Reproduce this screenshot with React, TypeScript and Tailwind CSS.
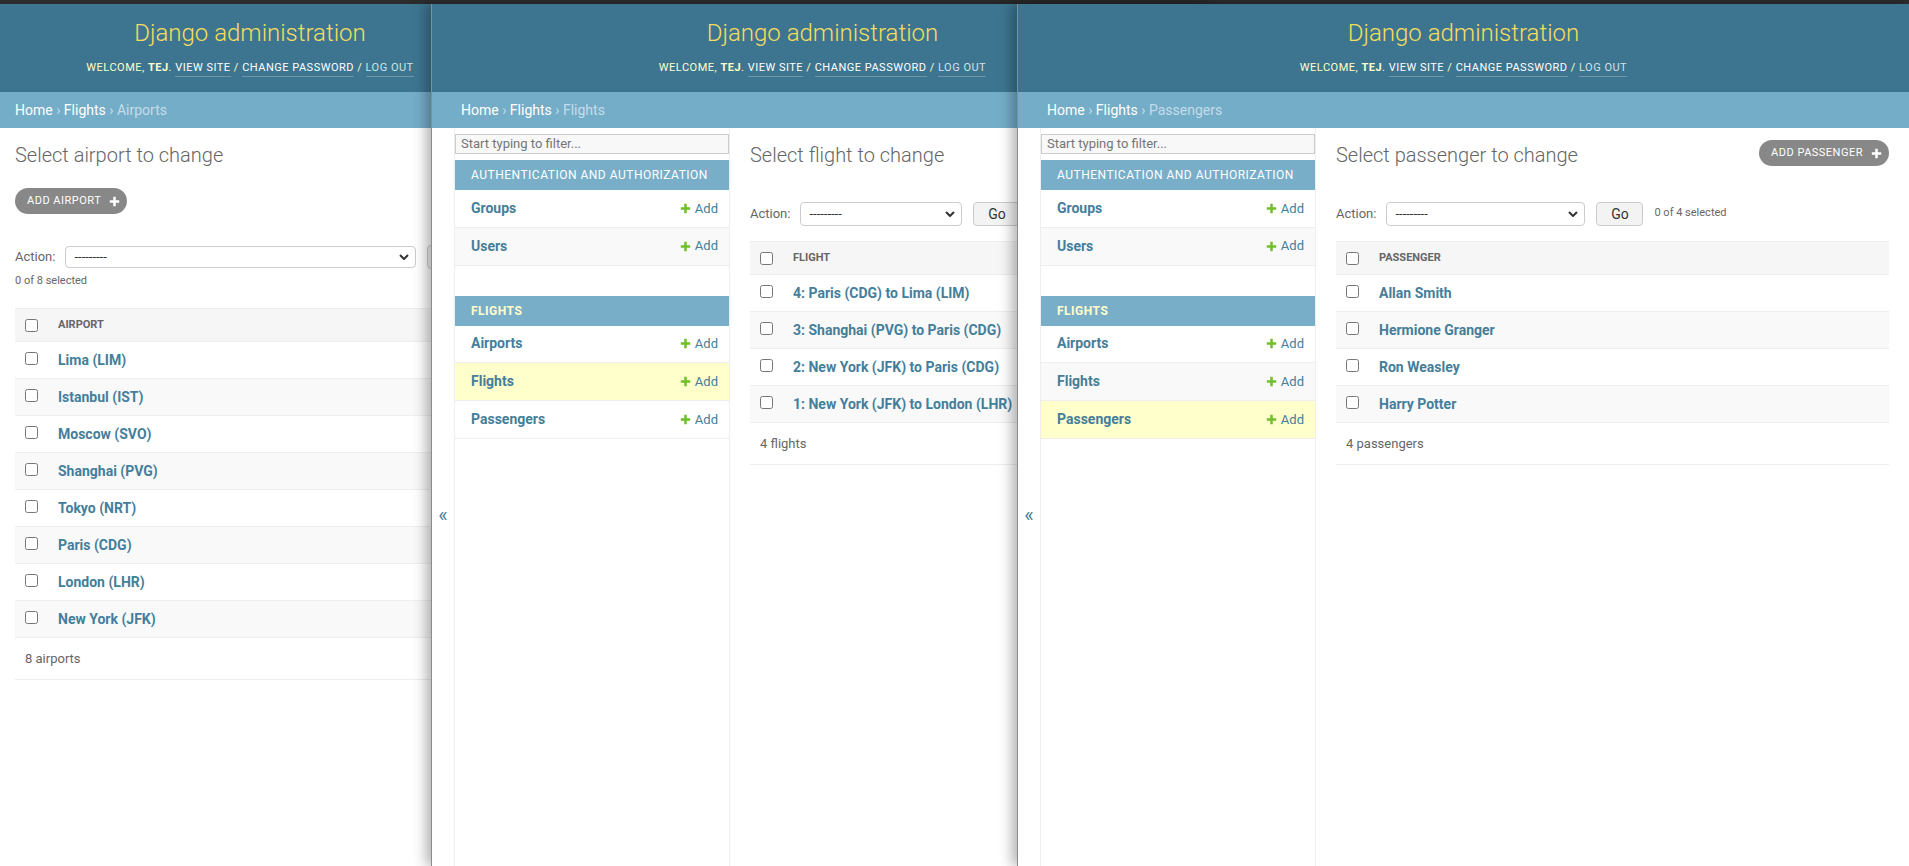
import React from 'react';

type Props = { className?: string };

function PlusIcon({ className }: Props) {
  return (
    <svg viewBox="0 0 14 14" className={className} fill="currentColor">
      <path d="M5.4 1h3.2v4.4H13v3.2H8.6V13H5.4V8.6H1V5.4h4.4z" />
    </svg>
  );
}

function Window({ className, children }: { className: string; children: React.ReactNode }) {
  return (
    <div className={`absolute top-[4px] bottom-0 bg-white flex flex-col overflow-hidden ${className}`}>
      {children}
    </div>
  );
}

function Header() {
  return (
    <div className="h-[88px] shrink-0 bg-[#3d7590] flex flex-col items-center pt-[15px]">
      <div className="text-[24px] leading-[29px] font-light text-[#f5dd5d] whitespace-nowrap">Django administration</div>
      <div className="mt-[13px] text-[11px] leading-[14px] tracking-[0.5px] uppercase text-[#ffc] whitespace-nowrap">
        Welcome, <strong className="font-bold">Tej</strong>.{' '}
        <span className="text-white border-b border-white/25 pb-[2px]">View site</span> /{' '}
        <span className="text-white border-b border-white/25 pb-[2px]">Change password</span> /{' '}
        <span className="text-[#d3e1e9] border-b border-white/25 pb-[2px]">Log out</span>
      </div>
    </div>
  );
}

function Crumbs({ pad, current }: { pad: string; current: string }) {
  return (
    <div className={`h-[36px] shrink-0 bg-[#74adc8] flex items-center text-[14px] text-[#c4dce8] whitespace-nowrap ${pad}`}>
      <span className="text-white">Home</span>&nbsp;›&nbsp;<span className="text-white">Flights</span>&nbsp;›&nbsp;{current}
    </div>
  );
}

function AddButton({ label, className }: { label: string; className: string }) {
  return (
    <div className={`flex shrink-0 ${className}`}>
      <div className="h-[26px] rounded-full bg-[#888] flex items-center pl-[12px] pr-[7px] gap-[8px] text-[11px] tracking-[0.5px] uppercase text-white whitespace-nowrap">
        {label}
        <PlusIcon className="w-[11px] h-[11px] text-white" />
      </div>
    </div>
  );
}

function Select({ w, h }: { w: string; h: string }) {
  return (
    <div className={`${w} ${h} ml-[10px] border border-[#ccc] rounded-[4px] bg-white flex items-center pl-[8px] pr-[6px] text-[13px] text-[#333]`}>
      <span className="flex-1">---------</span>
      <svg viewBox="0 0 10 6" className="w-[10px] h-[6px]" fill="none" stroke="#333" strokeWidth="2">
        <path d="M1 1l4 4 4-4" />
      </svg>
    </div>
  );
}

function ActionBar({ w, h, selected }: { w: string; h: string; selected?: string }) {
  return (
    <div className="flex items-center whitespace-nowrap">
      <span className="text-[13px] text-[#666]">Action:</span>
      <Select w={w} h={h} />
      <div className="ml-[11px] h-[24px] w-[47px] shrink-0 border border-[#ccc] rounded-[4px] bg-[#f3f3f3] flex items-center justify-center text-[14px] text-[#333]">
        Go
      </div>
      {selected && <span className="ml-[11px] text-[11px] text-[#666] mb-[2px]">{selected}</span>}
    </div>
  );
}

function ResultTable({ col, items, count, className }: { col: string; items: string[]; count: string; className: string }) {
  return (
    <div className={className}>
      <div className="h-[34px] bg-[#f6f6f6] border-y border-[#eee] flex items-center">
        <div className="w-[43px] pl-[10px] flex">
          <input type="checkbox" className="w-[13px] h-[13px]" />
        </div>
        <span className="text-[11px] font-bold text-[#666] uppercase">{col}</span>
      </div>
      {items.map((t, i) => (
        <div key={t} className={`h-[37px] border-b border-[#eee] flex items-center ${i % 2 ? 'bg-[#f9f9f9]' : 'bg-white'}`}>
          <div className="w-[43px] pl-[10px] flex mb-[3px]">
            <input type="checkbox" className="w-[13px] h-[13px]" />
          </div>
          <span className="text-[14px] font-bold text-[#447e9b] whitespace-nowrap">{t}</span>
        </div>
      ))}
      <div className="h-[42px] border-b border-[#eee] flex items-center pl-[10px] text-[13px] text-[#666]">{count}</div>
    </div>
  );
}

function SideRow({ name, bg }: { name: string; bg: string }) {
  return (
    <div className={`h-[37.8px] border-b border-[#eee] flex items-center pl-[16px] pr-[11px] ${bg}`}>
      <span className="flex-1 text-[14px] font-bold text-[#447e9b]">{name}</span>
      <span className="flex items-center gap-[4px] text-[13px] text-[#447e9b]">
        <PlusIcon className="w-[11px] h-[11px] text-[#70bf2b]" />
        Add
      </span>
    </div>
  );
}

function Sidebar({ current }: { current: string }) {
  const bg = (name: string, odd: boolean) =>
    name === current ? 'bg-[#ffffcc]' : odd ? 'bg-[#f9f9f9]' : 'bg-white';
  return (
    <div className="w-[276px] shrink-0 border-x border-[#eee] flex flex-col">
      <div className="h-[20px] my-[6px] border border-[#ccc] bg-[#f8f8f8] px-[5px] text-[13px] leading-[18px] text-[#757575] whitespace-nowrap">
        Start typing to filter...
      </div>
      <div className="h-[30px] bg-[#79aec8] flex items-center pl-[16px] text-[12px] tracking-[0.5px] uppercase text-white whitespace-nowrap">
        Authentication and Authorization
      </div>
      <SideRow name="Groups" bg="bg-white" />
      <SideRow name="Users" bg="bg-[#f9f9f9]" />
      <div className="h-[30px]" />
      <div className="h-[30px] bg-[#79aec8] flex items-center pl-[16px] text-[12px] tracking-[0.5px] uppercase font-bold text-[#ffc]">
        Flights
      </div>
      <SideRow name="Airports" bg={bg('Airports', false)} />
      <SideRow name="Flights" bg={bg('Flights', true)} />
      <SideRow name="Passengers" bg={bg('Passengers', false)} />
    </div>
  );
}

function SidebarPage({
  current,
  title,
  add,
  select,
  col,
  items,
  count,
}: {
  current: string;
  title: string;
  add: string;
  select: string;
  col: string;
  items: string[];
  count: string;
}) {
  return (
    <>
      <Header />
      <Crumbs pad="px-[29px]" current={current} />
      <div className="flex flex-1">
        <div className="w-[22px] shrink-0 flex justify-center pt-[375px] text-[20px] leading-[24px] text-[#447e9b]">«</div>
        <Sidebar current={current} />
        <div className="flex-1 min-w-0 px-[20px]">
          <div className="flex items-start justify-between">
            <h1 className="mt-[15px] text-[20px] leading-[24px] font-light text-[#666] whitespace-nowrap">{title}</h1>
            <AddButton label={add} className="mt-[12px]" />
          </div>
          <div className="mt-[35px]">
            <ActionBar w={select} h="h-[24px]" selected="0 of 4 selected" />
          </div>
          <ResultTable className="mt-[15px]" col={col} items={items} count={count} />
        </div>
      </div>
    </>
  );
}

export default function App() {
  return (
    <div className="relative w-[1909px] h-[866px] overflow-hidden bg-[#2c2c2c] font-['Roboto','Liberation_Sans',sans-serif]">
      <Window className="left-0 w-[500px]">
        <Header />
        <Crumbs pad="px-[15px]" current="Airports" />
        <div className="px-[15px]">
          <h1 className="mt-[15px] text-[20px] leading-[24px] font-light text-[#666]">Select airport to change</h1>
          <AddButton label="Add airport" className="mt-[21px]" />
          <div className="mt-[31px]">
            <ActionBar w="w-[351px]" h="h-[22px]" />
          </div>
          <div className="mt-[4px] text-[11px] leading-[16px] text-[#666]">0 of 8 selected</div>
          <ResultTable
            className="mt-[19px]"
            col="Airport"
            items={[
              'Lima (LIM)',
              'Istanbul (IST)',
              'Moscow (SVO)',
              'Shanghai (PVG)',
              'Tokyo (NRT)',
              'Paris (CDG)',
              'London (LHR)',
              'New York (JFK)',
            ]}
            count="8 airports"
          />
        </div>
      </Window>

      <Window className="left-[431px] w-[782px] border-l border-[#8c8c8c] shadow-[-5px_0_12px_rgba(0,0,0,0.3)]">
        <SidebarPage
          current="Flights"
          title="Select flight to change"
          add="Add flight"
          select="w-[162px]"
          col="Flight"
          items={[
            '4: Paris (CDG) to Lima (LIM)',
            '3: Shanghai (PVG) to Paris (CDG)',
            '2: New York (JFK) to Paris (CDG)',
            '1: New York (JFK) to London (LHR)',
          ]}
          count="4 flights"
        />
      </Window>

      <Window className="left-[1017px] w-[892px] border-l border-[#8c8c8c] shadow-[-5px_0_12px_rgba(0,0,0,0.3)]">
        <SidebarPage
          current="Passengers"
          title="Select passenger to change"
          add="Add passenger"
          select="w-[199px]"
          col="Passenger"
          items={['Allan Smith', 'Hermione Granger', 'Ron Weasley', 'Harry Potter']}
          count="4 passengers"
        />
      </Window>
    </div>
  );
}
